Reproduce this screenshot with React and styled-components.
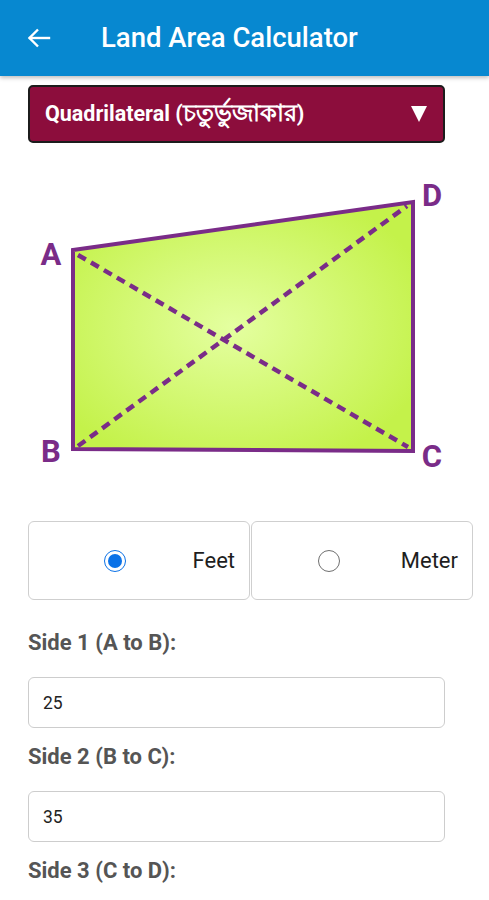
import React from "react";
import styled, { createGlobalStyle } from "styled-components";

const Global = createGlobalStyle`
  html, body { margin: 0; padding: 0; background: #fff; }
  body { font-family: Roboto, "Noto Sans", sans-serif; }
  * { box-sizing: border-box; }
`;

const Page = styled.div`
  width: 489px;
  min-height: 900px;
  background: #fff;
  overflow: hidden;
`;

const Header = styled.header`
  height: 76px;
  background: #0788d0;
  display: flex;
  align-items: center;
  padding-left: 27px;
  gap: 50px;
  box-shadow: 0 2px 4px rgba(0, 0, 0, 0.25);
  position: relative;
  z-index: 1;
`;

const Title = styled.h1`
  margin: 0;
  color: #fff;
  font-family: Roboto, sans-serif;
  font-weight: 500;
  font-size: 27.5px;
  line-height: 32px;
`;

const Content = styled.main`
  padding: 9px 16px 0 28px;
`;

const Dropdown = styled.div`
  width: 417px;
  height: 58px;
  background: #8c0d3c;
  border: 2px solid #1c1c1c;
  border-radius: 5px;
  display: flex;
  align-items: center;
  justify-content: space-between;
  padding: 0 16px 0 15px;
  color: #fff;
  font-family: Roboto, "Noto Sans", sans-serif;
  font-weight: 700;
  font-size: 21.5px;
`;

const Native = styled.span`
  font-size: 23.5px;
`;

const Figure = styled.div`
  margin-top: 17px;
  width: 417px;
  height: 330px;
`;

const RadioGroup = styled.div`
  margin-top: 31px;
  display: grid;
  grid-template-columns: 222px 222px;
  gap: 1px;
`;

const RadioBox = styled.label`
  height: 79px;
  border: 1px solid #cfcfcf;
  border-radius: 6px;
  display: flex;
  align-items: center;
  justify-content: flex-end;
  padding-right: 14px;
  gap: ${(p) => p.$gap}px;
  font-family: Roboto, sans-serif;
  font-size: 22px;
  color: #1e1e1e;
`;

const RadioCircle = styled.span`
  width: 22px;
  height: 22px;
  border-radius: 50%;
  border: 1.5px solid ${(p) => (p.$checked ? "#0b72e7" : "#6f6f6f")};
  display: flex;
  align-items: center;
  justify-content: center;
  &::after {
    content: "";
    width: 14px;
    height: 14px;
    border-radius: 50%;
    background: ${(p) => (p.$checked ? "#0b72e7" : "transparent")};
  }
`;

const FieldLabel = styled.div`
  margin-top: ${(p) => (p.$first ? 31 : 17)}px;
  margin-bottom: 22px;
  line-height: 24px;
  font-family: Roboto, sans-serif;
  font-weight: 700;
  font-size: 22px;
  color: #555;
`;

const Input = styled.div`
  width: 417px;
  height: 51px;
  border: 1px solid #cdcdcd;
  border-radius: 6px;
  display: flex;
  align-items: center;
  padding-left: 14px;
  font-family: Roboto, sans-serif;
  font-size: 17.5px;
  color: #222;
`;

const BackArrow = () => (
  <svg width="24" height="24" viewBox="0 0 24 24" fill="none" stroke="#fff" strokeWidth="2.4" strokeLinecap="square">
    <path d="M22 12H3" />
    <path d="M11 3.5L2.5 12L11 20.5" strokeLinecap="butt" />
  </svg>
);

const Caret = () => (
  <svg width="16" height="18" viewBox="0 0 16 18">
    <polygon points="0,1 16,1 8,17" fill="#fff" />
  </svg>
);

const Diagram = () => {
  const A = [45, 90], D = [385, 42], C = [385, 291], B = [45, 289];
  const purple = "#7a2c88";
  const lbl = { fontFamily: "Roboto, 'Liberation Sans', sans-serif", fontWeight: 700, fontSize: 31, fill: purple };
  return (
    <svg width="417" height="330" viewBox="0 0 417 330">
      <defs>
        <radialGradient id="g" cx="0.47" cy="0.5" r="0.6">
          <stop offset="0" stopColor="#e4ffa0" />
          <stop offset="1" stopColor="#c4f24a" />
        </radialGradient>
      </defs>
      <polygon
        points={`${A} ${D} ${C} ${B}`}
        fill="url(#g)"
        stroke={purple}
        strokeWidth="4"
        strokeLinejoin="miter"
      />
      <line x1={A[0] + 5} y1={A[1] + 5} x2={C[0] - 5} y2={C[1] - 4} stroke={purple} strokeWidth="4.5" strokeDasharray="9 6" />
      <line x1={B[0] + 5} y1={B[1] - 3} x2={D[0] - 6} y2={D[1] + 4} stroke={purple} strokeWidth="4.5" strokeDasharray="9 6" />
      <text x="23" y="105" textAnchor="middle" style={lbl}>A</text>
      <text x="404" y="46" textAnchor="middle" style={lbl}>D</text>
      <text x="23" y="302" textAnchor="middle" style={lbl}>B</text>
      <text x="404" y="307" textAnchor="middle" style={lbl}>C</text>
    </svg>
  );
};

export default function App() {
  return (
    <Page>
      <Global />
      <Header>
        <BackArrow />
        <Title>Land Area Calculator</Title>
      </Header>
      <Content>
        <Dropdown>
          <span>
            Quadrilateral (<Native>চতুর্ভুজাকার</Native>)
          </span>
          <Caret />
        </Dropdown>
        <Figure>
          <Diagram />
        </Figure>
        <RadioGroup>
          <RadioBox $gap={67}>
            <RadioCircle $checked />
            <span>Feet</span>
          </RadioBox>
          <RadioBox $gap={61}>
            <RadioCircle />
            <span>Meter</span>
          </RadioBox>
        </RadioGroup>
        <FieldLabel $first>Side 1 (A to B):</FieldLabel>
        <Input>25</Input>
        <FieldLabel>Side 2 (B to C):</FieldLabel>
        <Input>35</Input>
        <FieldLabel>Side 3 (C to D):</FieldLabel>
      </Content>
    </Page>
  );
}
